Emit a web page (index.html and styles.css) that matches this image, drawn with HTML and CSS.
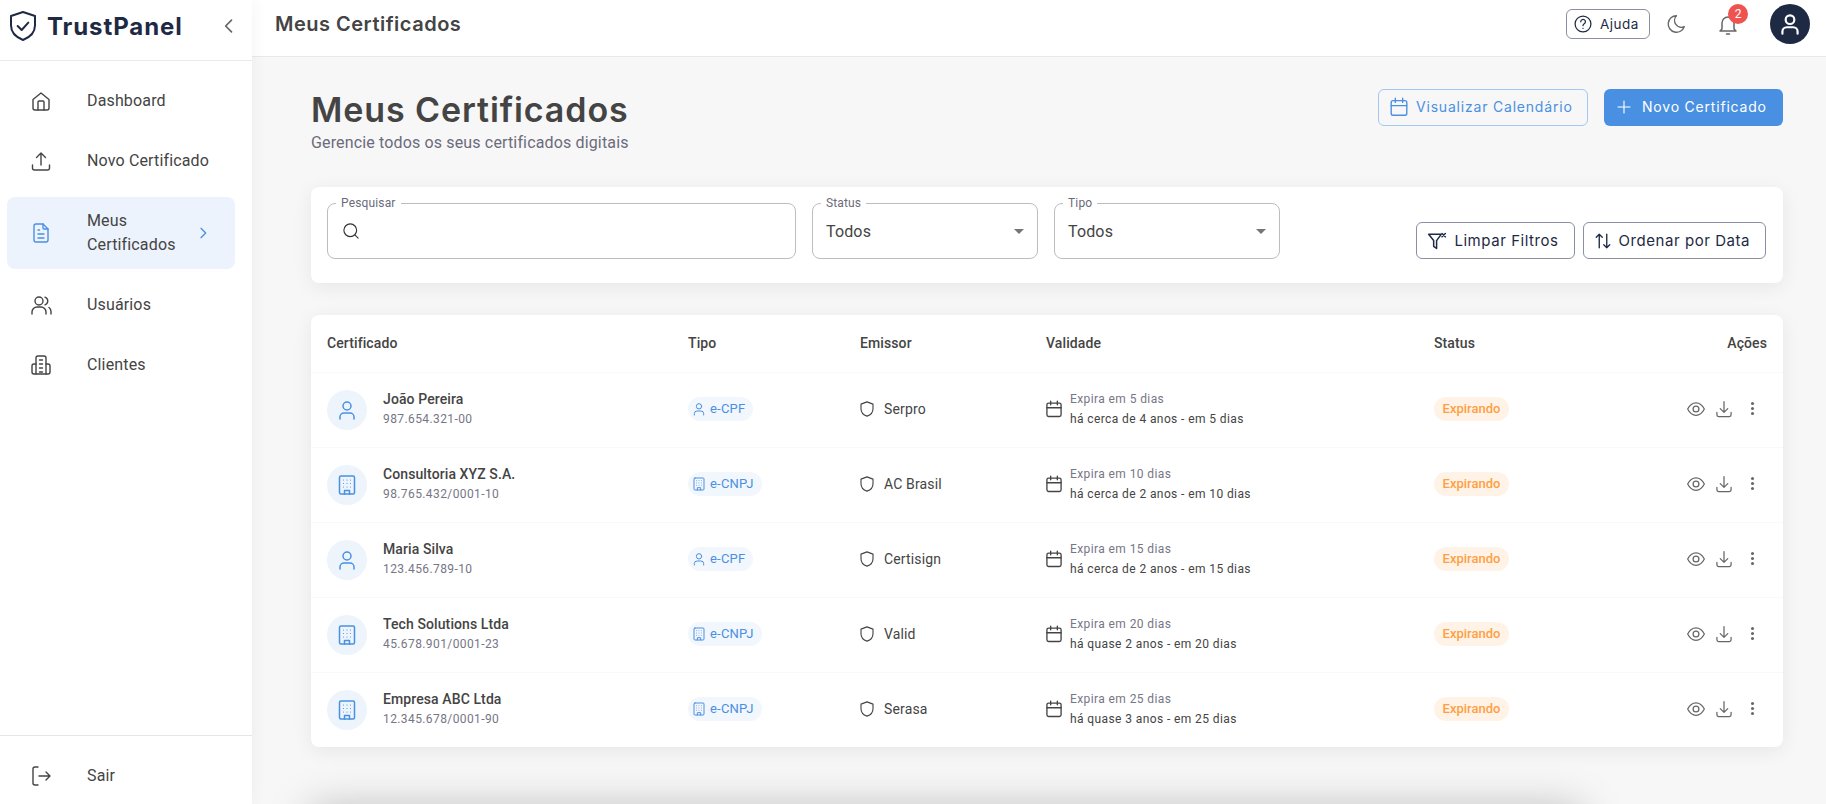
FILE: index.html
```html
<!DOCTYPE html>
<html lang="pt-BR">
<head>
	<meta charset="utf-8">
	<title>TrustPanel - Meus Certificados</title>
	<link rel="stylesheet" href="styles.css">
</head>
<body>

<svg class="sprite" xmlns="http://www.w3.org/2000/svg">
	<symbol id="i-home" viewBox="0 0 24 24"><path d="M4 10.500 12 4l8 6.500V19a2 2 0 0 1-2 2H6a2 2 0 0 1-2-2z"/><path d="M9 21v-8a1 1 0 0 1 1-1h4a1 1 0 0 1 1 1v8"/></symbol>
	<symbol id="i-upload" viewBox="0 0 24 24"><path d="M3.500 16v3a2 2 0 0 0 2 2h13a2 2 0 0 0 2-2v-3"/><path d="M12 16V4M7.500 8.500 12 4l4.500 4.500"/></symbol>
	<symbol id="i-file" viewBox="0 0 24 24"><path d="M14 3H7a2 2 0 0 0-2 2v14a2 2 0 0 0 2 2h10a2 2 0 0 0 2-2V8z"/><path d="M14 3v4a1 1 0 0 0 1 1h4"/><path d="M9 9h1.500M9 13h6M9 17h6"/></symbol>
	<symbol id="i-users" viewBox="0 0 24 24"><circle cx="10" cy="8" r="4"/><path d="M3 21v-2a5 5 0 0 1 5-5h4a5 5 0 0 1 5 5v2"/><path d="M16 4.200a4 4 0 0 1 0 7.600M20 14.500a5 5 0 0 1 2 4V21"/></symbol>
	<symbol id="i-buildings" viewBox="0 0 24 24"><path d="M7 21V5a2 2 0 0 1 2-2h6a2 2 0 0 1 2 2v16"/><path d="M7 11H5a2 2 0 0 0-2 2v6a2 2 0 0 0 2 2h14a2 2 0 0 0 2-2v-6a2 2 0 0 0-2-2h-2"/><path d="M10.500 7h3M10.500 11h3M10.500 15h3M10.500 19h3"/></symbol>
	<symbol id="i-logout" viewBox="0 0 24 24"><path d="M9 3H6a2 2 0 0 0-2 2v14a2 2 0 0 0 2 2h3"/><path d="M10 12h11M17 8l4 4-4 4"/></symbol>
	<symbol id="i-shield" viewBox="0 0 24 24"><path d="M12 2.500 20 5.500v6c0 5-3.400 8.500-8 10-4.600-1.500-8-5-8-10v-6z"/></symbol>
	<symbol id="i-brand" viewBox="0 0 24 24"><path d="M12 1.500 21 4.500v7c0 5.200-3.800 9-9 11-5.200-2-9-5.800-9-11v-7z"/><path d="m8 12 3 3 5-5.500"/></symbol>
	<symbol id="i-help" viewBox="0 0 24 24"><circle cx="12" cy="12" r="9.500"/><path d="M9.300 9.300a2.800 2.800 0 1 1 4.200 2.500c-1 .6-1.500 1.100-1.500 2.200"/><path d="M12 17.200v.1"/></symbol>
	<symbol id="i-moon" viewBox="0 0 24 24"><path d="M12.500 3a9 9 0 1 0 8.500 12 7.500 7.500 0 0 1-8.500-12z"/></symbol>
	<symbol id="i-bell" viewBox="0 0 24 24"><path d="M6 17V11a6 6 0 0 1 12 0v6l2 2H4z"/><path d="M10.500 22h3"/></symbol>
	<symbol id="i-user" viewBox="0 0 24 24"><circle cx="12" cy="8" r="4"/><path d="M5 21v-2a4 4 0 0 1 4-4h6a4 4 0 0 1 4 4v2"/></symbol>
	<symbol id="i-calendar" viewBox="0 0 24 24"><rect x="3.500" y="5" width="17" height="16" rx="2"/><path d="M3.500 10.500h17M8 2.500V7M16 2.500V7"/></symbol>
	<symbol id="i-plus" viewBox="0 0 24 24"><path d="M12 4v16M4 12h16"/></symbol>
	<symbol id="i-search" viewBox="0 0 24 24"><circle cx="11" cy="11" r="8.500"/><path d="m17.500 17.500 4 4"/></symbol>
	<symbol id="i-filter" viewBox="0 0 24 24"><path d="M2 4h15l-5.500 7.500V21L8 18.500v-7z"/><path d="m18 3 4 4M22 3l-4 4"/></symbol>
	<symbol id="i-sort" viewBox="0 0 24 24"><path d="M7 21V3M3 7l4-4 4 4"/><path d="M17 3v18M13 17l4 4 4-4"/></symbol>
	<symbol id="i-building" viewBox="0 0 24 24"><rect x="4.500" y="3" width="15" height="18" rx="1.500"/><path d="M9.500 21v-3.500h5V21"/><path class="dots" d="M8.500 7h.01M12 7h.01M15.500 7h.01M8.500 10.500h.01M12 10.500h.01M15.500 10.500h.01M8.500 14h.01M12 14h.01M15.500 14h.01"/></symbol>
	<symbol id="i-eye" viewBox="0 0 24 24"><path d="M2 12c2.500-5 5.800-7.500 10-7.500S19.500 7 22 12c-2.500 5-5.800 7.500-10 7.500S4.500 17 2 12z"/><circle cx="12" cy="12" r="3.500"/></symbol>
	<symbol id="i-download" viewBox="0 0 24 24"><path d="M3.500 16v3a2 2 0 0 0 2 2h13a2 2 0 0 0 2-2v-3"/><path d="M12 3v13M7.500 11.500 12 16l4.500-4.500"/></symbol>
</svg>

<aside class="sidebar">
	<div class="brand">
		<svg class="brand-icon"><use href="#i-brand"/></svg>
		<span class="brand-name">TrustPanel</span>
		<svg class="collapse" viewBox="0 0 24 24"><path d="m15 5-7 7 7 7"/></svg>
	</div>
	<nav class="nav">
		<a class="nav-item" href="#"><svg class="nav-icon"><use href="#i-home"/></svg><span>Dashboard</span></a>
		<a class="nav-item" href="#"><svg class="nav-icon"><use href="#i-upload"/></svg><span>Novo Certificado</span></a>
		<a class="nav-item active" href="#"><svg class="nav-icon"><use href="#i-file"/></svg><span>Meus Certificados</span><svg class="nav-arrow" viewBox="0 0 24 24"><path d="m9 5 7 7-7 7"/></svg></a>
		<a class="nav-item" href="#"><svg class="nav-icon"><use href="#i-users"/></svg><span>Usuários</span></a>
		<a class="nav-item" href="#"><svg class="nav-icon"><use href="#i-buildings"/></svg><span>Clientes</span></a>
	</nav>
	<div class="side-foot">
		<a class="nav-item" href="#"><svg class="nav-icon"><use href="#i-logout"/></svg><span>Sair</span></a>
	</div>
</aside>

<div class="main">
	<header class="topbar">
		<div class="top-title">Meus Certificados</div>
		<button class="help-btn"><svg><use href="#i-help"/></svg>Ajuda</button>
		<button class="top-icon"><svg class="icon-22"><use href="#i-moon"/></svg></button>
		<button class="top-icon bell"><svg class="icon-24"><use href="#i-bell"/></svg><span class="badge">2</span></button>
		<div class="avatar"><svg><use href="#i-user"/></svg></div>
	</header>

	<div class="content">
		<div class="page-head">
			<div>
				<h1>Meus Certificados</h1>
				<p>Gerencie todos os seus certificados digitais</p>
			</div>
			<div class="page-actions">
				<button class="btn btn-outline"><svg class="icon-22"><use href="#i-calendar"/></svg>Visualizar Calendário</button>
				<button class="btn btn-primary"><svg class="icon-18"><use href="#i-plus"/></svg>Novo Certificado</button>
			</div>
		</div>

		<section class="card filters">
			<div class="field field-search">
				<label>Pesquisar</label>
				<svg class="icon-18"><use href="#i-search"/></svg>
				<input type="text">
			</div>
			<div class="field field-select">
				<label>Status</label>
				<span>Todos</span>
				<i class="caret"></i>
			</div>
			<div class="field field-select">
				<label>Tipo</label>
				<span>Todos</span>
				<i class="caret"></i>
			</div>
			<div class="filter-btns">
				<button class="btn btn-dark"><svg class="icon-20"><use href="#i-filter"/></svg>Limpar Filtros</button>
				<button class="btn btn-dark"><svg class="icon-18"><use href="#i-sort"/></svg>Ordenar por Data</button>
			</div>
		</section>

		<section class="card table-card">
			<table>
				<thead>
					<tr>
						<th class="col-cert">Certificado</th>
						<th class="col-type">Tipo</th>
						<th class="col-issuer">Emissor</th>
						<th class="col-valid">Validade</th>
						<th class="col-status">Status</th>
						<th class="col-actions">Ações</th>
					</tr>
				</thead>
				<tbody>
					<tr>
						<td><div class="owner"><span class="owner-icon"><svg class="icon-24"><use href="#i-user"/></svg></span><div><div class="name">João Pereira</div><div class="small">987.654.321-00</div></div></div></td>
						<td><span class="chip"><svg class="icon-16"><use href="#i-user"/></svg>e-CPF</span></td>
						<td><div class="issuer"><svg class="icon-18"><use href="#i-shield"/></svg>Serpro</div></td>
						<td><div class="valid"><svg class="icon-20"><use href="#i-calendar"/></svg><div><div class="small">Expira em 5 dias</div><div class="range">há cerca de 4 anos - em 5 dias</div></div></div></td>
						<td><span class="status">Expirando</span></td>
						<td><div class="actions"><svg class="icon-20"><use href="#i-eye"/></svg><svg class="icon-20"><use href="#i-download"/></svg><span class="dots-v"><i></i><i></i><i></i></span></div></td>
					</tr>
					<tr>
						<td><div class="owner"><span class="owner-icon"><svg class="icon-24"><use href="#i-building"/></svg></span><div><div class="name">Consultoria XYZ S.A.</div><div class="small">98.765.432/0001-10</div></div></div></td>
						<td><span class="chip"><svg class="icon-16"><use href="#i-building"/></svg>e-CNPJ</span></td>
						<td><div class="issuer"><svg class="icon-18"><use href="#i-shield"/></svg>AC Brasil</div></td>
						<td><div class="valid"><svg class="icon-20"><use href="#i-calendar"/></svg><div><div class="small">Expira em 10 dias</div><div class="range">há cerca de 2 anos - em 10 dias</div></div></div></td>
						<td><span class="status">Expirando</span></td>
						<td><div class="actions"><svg class="icon-20"><use href="#i-eye"/></svg><svg class="icon-20"><use href="#i-download"/></svg><span class="dots-v"><i></i><i></i><i></i></span></div></td>
					</tr>
					<tr>
						<td><div class="owner"><span class="owner-icon"><svg class="icon-24"><use href="#i-user"/></svg></span><div><div class="name">Maria Silva</div><div class="small">123.456.789-10</div></div></div></td>
						<td><span class="chip"><svg class="icon-16"><use href="#i-user"/></svg>e-CPF</span></td>
						<td><div class="issuer"><svg class="icon-18"><use href="#i-shield"/></svg>Certisign</div></td>
						<td><div class="valid"><svg class="icon-20"><use href="#i-calendar"/></svg><div><div class="small">Expira em 15 dias</div><div class="range">há cerca de 2 anos - em 15 dias</div></div></div></td>
						<td><span class="status">Expirando</span></td>
						<td><div class="actions"><svg class="icon-20"><use href="#i-eye"/></svg><svg class="icon-20"><use href="#i-download"/></svg><span class="dots-v"><i></i><i></i><i></i></span></div></td>
					</tr>
					<tr>
						<td><div class="owner"><span class="owner-icon"><svg class="icon-24"><use href="#i-building"/></svg></span><div><div class="name">Tech Solutions Ltda</div><div class="small">45.678.901/0001-23</div></div></div></td>
						<td><span class="chip"><svg class="icon-16"><use href="#i-building"/></svg>e-CNPJ</span></td>
						<td><div class="issuer"><svg class="icon-18"><use href="#i-shield"/></svg>Valid</div></td>
						<td><div class="valid"><svg class="icon-20"><use href="#i-calendar"/></svg><div><div class="small">Expira em 20 dias</div><div class="range">há quase 2 anos - em 20 dias</div></div></div></td>
						<td><span class="status">Expirando</span></td>
						<td><div class="actions"><svg class="icon-20"><use href="#i-eye"/></svg><svg class="icon-20"><use href="#i-download"/></svg><span class="dots-v"><i></i><i></i><i></i></span></div></td>
					</tr>
					<tr>
						<td><div class="owner"><span class="owner-icon"><svg class="icon-24"><use href="#i-building"/></svg></span><div><div class="name">Empresa ABC Ltda</div><div class="small">12.345.678/0001-90</div></div></div></td>
						<td><span class="chip"><svg class="icon-16"><use href="#i-building"/></svg>e-CNPJ</span></td>
						<td><div class="issuer"><svg class="icon-18"><use href="#i-shield"/></svg>Serasa</div></td>
						<td><div class="valid"><svg class="icon-20"><use href="#i-calendar"/></svg><div><div class="small">Expira em 25 dias</div><div class="range">há quase 3 anos - em 25 dias</div></div></div></td>
						<td><span class="status">Expirando</span></td>
						<td><div class="actions"><svg class="icon-20"><use href="#i-eye"/></svg><svg class="icon-20"><use href="#i-download"/></svg><span class="dots-v"><i></i><i></i><i></i></span></div></td>
					</tr>
				</tbody>
			</table>
		</section>

		<div class="below-card"></div>
	</div>
</div>

</body>
</html>
```

FILE: styles.css
```css
* {
	box-sizing: border-box;
}

html, body {
	height: 804px;
}

body {
	margin: 0;
	display: flex;
	overflow: hidden;
	font-family: Roboto, "Liberation Sans", sans-serif;
	color: #444;
	background-color: #f7f7f7;
}

.sprite {
	display: none;
}

svg {
	fill: none;
	stroke: currentColor;
	stroke-width: 1.5;
	stroke-linecap: round;
	stroke-linejoin: round;
	flex-shrink: 0;
	display: block;
}

button {
	font-family: inherit;
	background: none;
	cursor: pointer;
}

a {
	color: inherit;
	text-decoration: none;
}

.icon-16 { width: 16px; height: 16px; }
.icon-18 { width: 18px; height: 18px; }
.icon-20 { width: 20px; height: 20px; }
.icon-22 { width: 22px; height: 22px; }
.icon-24 { width: 24px; height: 24px; }

/* sidebar */

.sidebar {
	width: 252px;
	flex-shrink: 0;
	height: 804px;
	background-color: #fff;
	display: flex;
	flex-direction: column;
	position: relative;
	z-index: 2;
	box-shadow: 0 0 16px rgba(0, 0, 0, 0.05);
}

.brand {
	height: 61px;
	padding: 0 13px 8px 7px;
	display: flex;
	align-items: center;
	border-bottom: 1px solid #e6e9f0;
}

.brand-icon {
	width: 32px;
	height: 32px;
	color: #1e2a44;
}

.brand-name {
	margin-left: 8px;
	font-family: Inter, sans-serif;
	font-size: 24px;
	font-weight: 700;
	letter-spacing: 0.9px;
	color: #1e2a44;
	flex: 1;
}

.collapse {
	width: 20px;
	height: 20px;
	color: #666;
	stroke-width: 2;
}

.nav {
	padding: 16px 17px 0 7px;
	display: flex;
	flex-direction: column;
	gap: 12px;
	flex: 1;
}

.nav-item {
	min-height: 48px;
	padding: 0 10px 0 22px;
	display: flex;
	align-items: center;
	font-size: 16px;
	line-height: 24px;
	letter-spacing: 0.15px;
	border-radius: 8px;
}

.nav-icon {
	width: 24px;
	height: 24px;
	margin-right: 34px;
	stroke-width: 1.4;
}

.nav-item.active {
	min-height: 72px;
	padding-right: 24px;
	background-color: #ecf3fc;
}

.nav-item.active .nav-icon,
.nav-arrow {
	color: #4a90e2;
}

.nav-arrow {
	width: 16px;
	height: 16px;
	margin-left: auto;
	stroke-width: 2;
}

.side-foot {
	height: 69px;
	padding: 16px 7px 0;
	border-top: 1px solid #e6e6e6;
}

/* top bar */

.main {
	flex: 1;
	min-width: 0;
	height: 804px;
	overflow: hidden;
}

.topbar {
	height: 57px;
	padding: 0 16px 9px 23px;
	display: flex;
	align-items: center;
	background-color: #fff;
	border-bottom: 1px solid #e6e9f0;
}

.top-title {
	flex: 1;
	font-family: Inter, sans-serif;
	font-size: 20px;
	font-weight: 600;
	letter-spacing: 0.5px;
}

.help-btn {
	height: 30px;
	width: 84px;
	padding: 0 0 0 6px;
	display: flex;
	align-items: center;
	gap: 7px;
	border: 1px solid #8a8fa3;
	border-radius: 6px;
	font-family: Inter, sans-serif;
	font-size: 13.5px;
	letter-spacing: 0.5px;
	color: #1e2a44;
}

.help-btn svg {
	width: 20px;
	height: 20px;
}

.top-icon {
	width: 40px;
	height: 40px;
	margin-left: 6px;
	padding: 0;
	border: 0;
	display: flex;
	align-items: center;
	justify-content: center;
	color: #666;
	position: relative;
}

.bell {
	margin-left: 12px;
}

.badge {
	position: absolute;
	top: 0;
	left: 20px;
	width: 20px;
	height: 20px;
	border-radius: 50%;
	background-color: #ef5350;
	color: #fff;
	font-size: 12px;
	line-height: 20px;
	text-align: center;
}

.avatar {
	width: 40px;
	height: 40px;
	margin-left: 22px;
	border-radius: 50%;
	background-color: #1e2a44;
	color: #fff;
	display: flex;
	align-items: center;
	justify-content: center;
}

.avatar svg {
	width: 26px;
	height: 26px;
	stroke-width: 2;
}

/* page */

.content {
	padding: 32px 43px 0 59px;
}

.page-head {
	height: 98px;
	display: flex;
	justify-content: space-between;
	align-items: flex-start;
}

h1 {
	margin: 0;
	font-family: Inter, sans-serif;
	font-size: 34px;
	font-weight: 600;
	line-height: 42px;
	letter-spacing: 0.9px;
	color: #444;
}

.page-head p {
	margin: 0;
	font-size: 16px;
	line-height: 24px;
	letter-spacing: 0.15px;
	color: #6b6b7b;
}

.page-actions {
	display: flex;
	gap: 16px;
}

.btn {
	height: 37px;
	display: flex;
	align-items: center;
	gap: 9px;
	border-radius: 6px;
	font-family: Inter, sans-serif;
	font-size: 14px;
	letter-spacing: 0.8px;
	white-space: nowrap;
}

.btn-outline {
	width: 210px;
	padding: 0 0 2px 9px;
	gap: 6px;
	border: 1px solid #a3c8f1;
	color: #4a90e2;
}

.btn-primary {
	width: 179px;
	padding: 0 0 2px 11px;
	border: 0;
	background-color: #4a90e2;
	color: #fff;
}

.card {
	background-color: #fff;
	border-radius: 8px;
	box-shadow: 0 4px 20px rgba(0, 0, 0, 0.07);
}

/* filters */

.filters {
	height: 96px;
	padding: 16px;
	display: flex;
	gap: 16px;
}

.field {
	height: 56px;
	border: 1px solid #bdbdbd;
	border-radius: 8px;
	display: flex;
	align-items: center;
	position: relative;
	font-size: 16px;
	letter-spacing: 0.15px;
}

.field label {
	position: absolute;
	top: -8px;
	left: 8px;
	padding: 0 5px;
	background-color: #fff;
	font-size: 12px;
	line-height: 14px;
	color: #6b6b7b;
}

.field-search {
	width: 469px;
	padding-left: 14px;
	gap: 8px;
}

.field-search svg {
	color: #333;
}

.field-search input {
	flex: 1;
	min-width: 0;
	border: 0;
	outline: 0;
	background: none;
}

.field-select {
	width: 226px;
	padding: 0 13px 0 13px;
	justify-content: space-between;
}

.caret {
	width: 0;
	height: 0;
	border-left: 5px solid transparent;
	border-right: 5px solid transparent;
	border-top: 5px solid #757575;
}

.filter-btns {
	height: 56px;
	margin-left: auto;
	margin-right: 1px;
	display: flex;
	align-items: flex-end;
	gap: 8px;
}

.btn-dark {
	padding: 0 15px 0 10px;
	gap: 7px;
	border: 1px solid #8a8fa3;
	font-size: 15px;
	letter-spacing: 0.55px;
	color: #1e2a44;
}

.btn-dark svg {
	stroke-width: 1.8;
}

/* table */

.table-card {
	height: 432px;
	margin-top: 32px;
	overflow: hidden;
}

table {
	width: 100%;
	border-collapse: collapse;
	table-layout: fixed;
}

th {
	height: 57px;
	padding: 0 16px;
	text-align: left;
	font-size: 14px;
	font-weight: 500;
	letter-spacing: 0.1px;
	border-bottom: 1px solid #f9f9f9;
}

td {
	height: 75px;
	padding: 0 16px 2px;
	font-size: 14px;
	border-bottom: 1px solid #f9f9f9;
}

tbody tr:last-child td {
	border-bottom: 0;
}

.col-cert { width: 361px; }
.col-type { width: 172px; }
.col-issuer { width: 186px; }
.col-valid { width: 388px; }
.col-status { width: 180px; }

.col-actions {
	text-align: right;
}

.owner {
	display: flex;
	align-items: center;
	gap: 16px;
}

.owner-icon {
	width: 40px;
	height: 40px;
	margin-top: 2px;
	border-radius: 50%;
	background-color: #edf4fc;
	color: #4a90e2;
	display: flex;
	align-items: center;
	justify-content: center;
}

.dots {
	stroke-width: 1.2;
}

.name {
	font-weight: 500;
	line-height: 20px;
	letter-spacing: 0.1px;
}

.small {
	font-size: 12px;
	line-height: 20px;
	letter-spacing: 0.4px;
	color: #767686;
}

.chip {
	height: 24px;
	padding: 0 8px 0 3px;
	display: inline-flex;
	align-items: center;
	gap: 3px;
	border-radius: 12px;
	background-color: #f2f6fd;
	color: #4a90e2;
	font-size: 13px;
	letter-spacing: 0.2px;
}

.issuer {
	display: flex;
	align-items: center;
	gap: 8px;
	letter-spacing: 0.15px;
}

.issuer svg {
	margin-left: -2px;
}

.valid {
	display: flex;
	align-items: center;
	gap: 6px;
}

.valid svg {
	margin-left: -2px;
	stroke-width: 1.6;
}

.range {
	font-size: 12px;
	line-height: 20px;
	letter-spacing: 0.4px;
}

.status {
	height: 24px;
	width: 75px;
	display: inline-flex;
	align-items: center;
	justify-content: center;
	border-radius: 12px;
	background-color: #fff3e8;
	color: #ff9f43;
	font-size: 13px;
	font-weight: 500;
}

.actions {
	padding-right: 5px;
	display: flex;
	justify-content: flex-end;
	align-items: center;
	gap: 8px;
	color: #666;
}

.dots-v {
	width: 20px;
	display: flex;
	flex-direction: column;
	align-items: center;
	gap: 2px;
}

.dots-v i {
	width: 3px;
	height: 3px;
	border-radius: 50%;
	background-color: #666;
}

/* next card, below the fold, only its shadow shows */

.below-card {
	width: 1270px;
	height: 200px;
	margin-top: 62px;
	background-color: #fff;
	box-shadow: 0 0 40px rgba(0, 0, 0, 0.25);
}
```
